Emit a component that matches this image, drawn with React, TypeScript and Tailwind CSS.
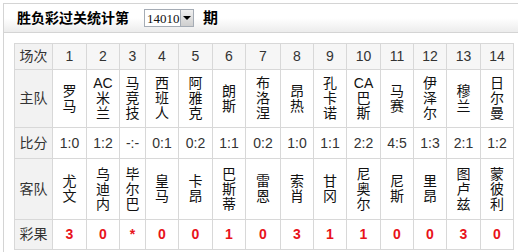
import React from 'react';

const matches = [
  { no: 1, home: ['罗', '马'], score: '1:0', away: ['尤', '文'], result: '3' },
  { no: 2, home: ['AC', '米', '兰'], score: '1:2', away: ['乌', '迪', '内'], result: '0' },
  { no: 3, home: ['马', '竞', '技'], score: '-:-', away: ['毕', '尔', '巴'], result: '*' },
  { no: 4, home: ['西', '班', '人'], score: '0:1', away: ['皇', '马'], result: '0' },
  { no: 5, home: ['阿', '雅', '克'], score: '0:2', away: ['卡', '昂'], result: '0' },
  { no: 6, home: ['朗', '斯'], score: '1:1', away: ['巴', '斯', '蒂'], result: '1' },
  { no: 7, home: ['布', '洛', '涅'], score: '0:2', away: ['雷', '恩'], result: '0' },
  { no: 8, home: ['昂', '热'], score: '1:0', away: ['索', '肖'], result: '3' },
  { no: 9, home: ['孔', '卡', '诺'], score: '1:1', away: ['甘', '冈'], result: '1' },
  { no: 10, home: ['CA', '巴', '斯'], score: '2:2', away: ['尼', '奥', '尔'], result: '1' },
  { no: 11, home: ['马', '赛'], score: '4:5', away: ['尼', '斯'], result: '0' },
  { no: 12, home: ['伊', '泽', '尔'], score: '1:3', away: ['里', '昂'], result: '0' },
  { no: 13, home: ['穆', '兰'], score: '2:1', away: ['图', '卢', '兹'], result: '3' },
  { no: 14, home: ['日', '尔', '曼'], score: '1:2', away: ['蒙', '彼', '利'], result: '0' },
];

const colWidths = [34, 33, 26, 33, 34, 33, 35, 33, 33, 34, 33, 33, 34, 33];

const cjk = "font-['Liberation_Sans','Noto_Sans_CJK_SC',sans-serif]";
const cell = 'border border-[#d8d8d8] text-center align-middle p-0';
const labelCell = `${cell} bg-[#f2f2f2] text-[14px] text-[#333]`;

function Stack({ chars }: { chars: string[] }) {
  return (
    <div className="flex flex-col items-center text-[14px] leading-[15px] text-[#111]">
      {chars.map((c, i) => (
        <span key={i}>{c}</span>
      ))}
    </div>
  );
}

export default function App() {
  return (
    <div className={`h-[252px] w-[518px] overflow-hidden bg-white ${cjk}`}>
      <div className="ml-[3px] mt-[3px] h-[260px] border-l border-t border-[#d4d4d4]">
        <div className="flex h-[29px] items-center border-b border-[#d4d4d4] bg-gradient-to-b from-white from-50% to-[#ececec] pl-[13px]">
          <span className="text-[14px] font-bold text-black">胜负彩过关统计第</span>
          <div className="ml-[15px] flex h-[18px] w-[50px] items-center border border-[#a5acb5] bg-white">
            <span className="flex-1 pl-[2px] font-['Liberation_Serif',serif] text-[13px] leading-none text-[#111]">14010</span>
            <span className="flex h-[16px] w-[15px] items-center justify-center border-l border-[#a5acb5] bg-gradient-to-b from-[#f0f0f0] to-[#cfcfcf]">
              <span className="h-0 w-0 border-x-[4px] border-t-[4px] border-x-transparent border-t-black" />
            </span>
          </div>
          <span className="ml-[9px] text-[15px] font-bold text-black">期</span>
        </div>
        <div className="pl-[10px] pt-[10px]">
          <table className="w-[499px] table-fixed border-collapse">
            <colgroup>
              <col style={{ width: 38 }} />
              {colWidths.map((w, i) => (
                <col key={i} style={{ width: w }} />
              ))}
            </colgroup>
            <tbody>
              <tr className="h-[26px]">
                <td className={labelCell}>场次</td>
                {matches.map((m) => (
                  <td key={m.no} className={`${cell} bg-[#f6f6f6] text-[14px] text-[#333]`}>
                    {m.no}
                  </td>
                ))}
              </tr>
              <tr className="h-[58px]">
                <td className={labelCell}>主队</td>
                {matches.map((m) => (
                  <td key={m.no} className={cell}>
                    <Stack chars={m.home} />
                  </td>
                ))}
              </tr>
              <tr className="h-[31px]">
                <td className={labelCell}>比分</td>
                {matches.map((m) => (
                  <td key={m.no} className={`${cell} text-[14px] text-[#333]`}>
                    {m.score}
                  </td>
                ))}
              </tr>
              <tr className="h-[61px]">
                <td className={labelCell}>客队</td>
                {matches.map((m) => (
                  <td key={m.no} className={cell}>
                    <Stack chars={m.away} />
                  </td>
                ))}
              </tr>
              <tr className="h-[30px]">
                <td className={labelCell}>彩果</td>
                {matches.map((m) => (
                  <td key={m.no} className={`${cell} text-[14px] font-bold text-[#e8131b]`}>
                    {m.result}
                  </td>
                ))}
              </tr>
            </tbody>
          </table>
          <div className="mt-[2px] flex justify-end pr-[4px]">
            <div className="h-[6px] w-[90px] rounded-t-[2px] border border-[#c8c8c8] bg-[#f4f4f4]" />
          </div>
        </div>
      </div>
    </div>
  );
}
